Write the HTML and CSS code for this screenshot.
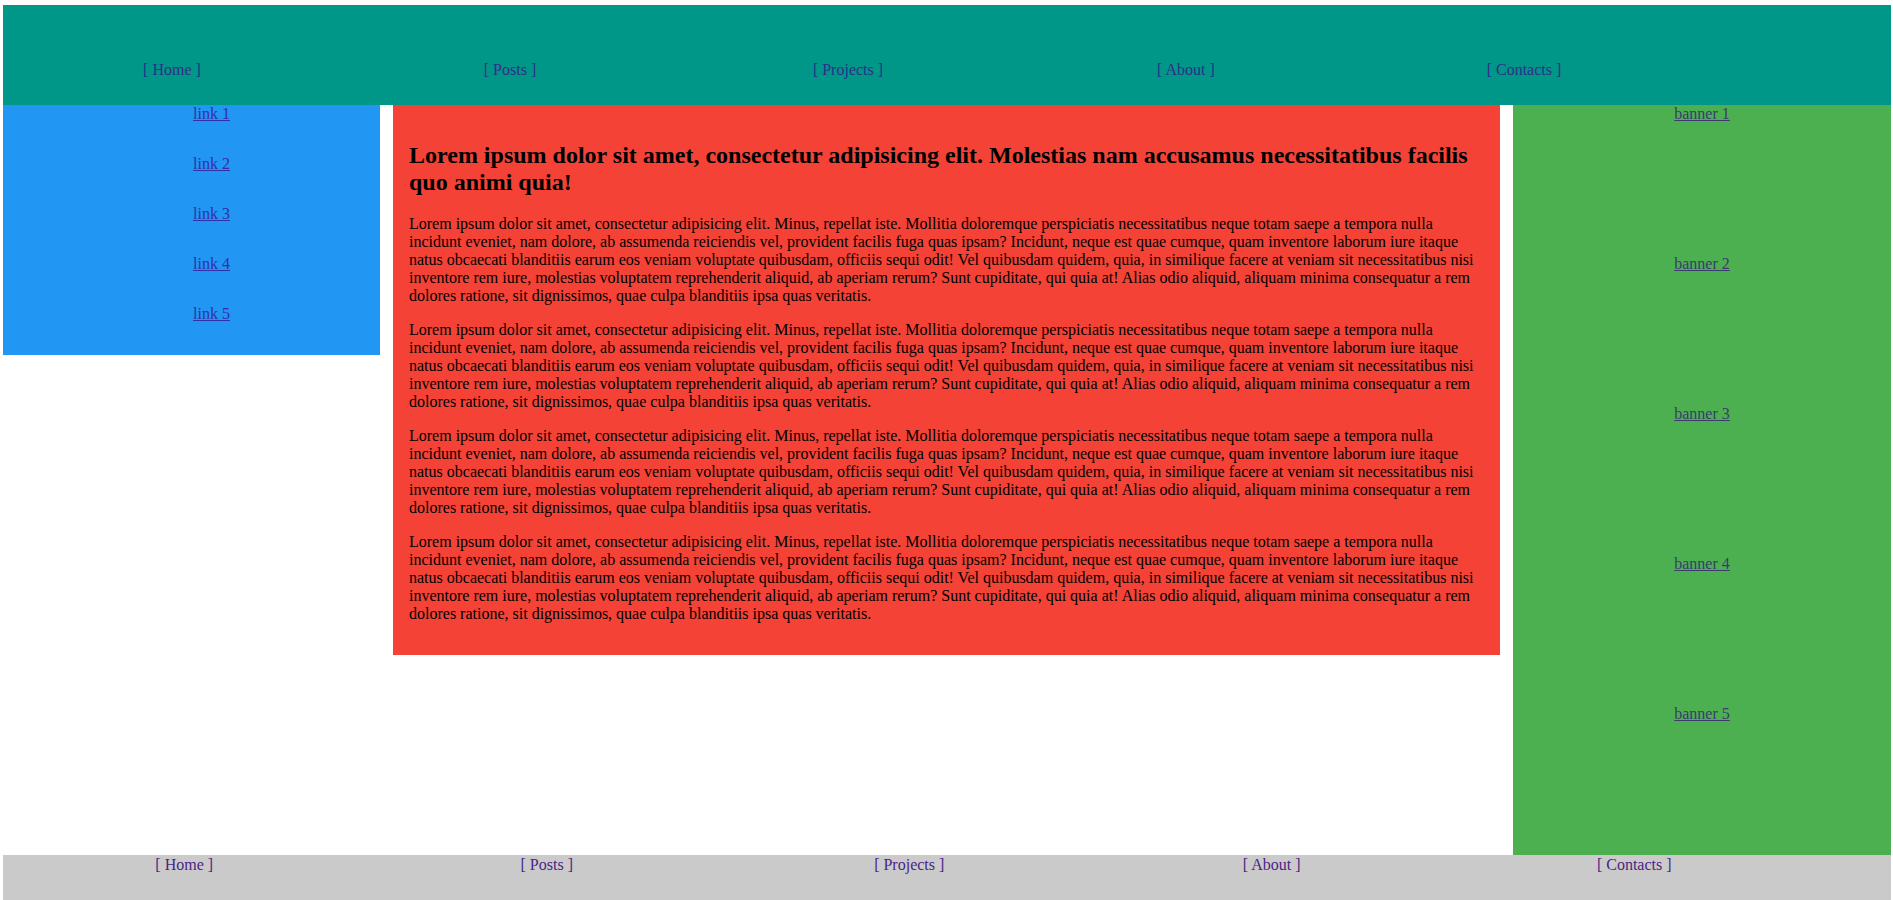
FILE: index.html
```html
<!DOCTYPE html>
<html lang="en">
<head>
<meta charset="utf-8">
<title>Layout</title>
<link rel="stylesheet" href="styles.css">
</head>
<body>
<header class="site-header">
  <nav class="top-nav">
    <a href="#">[ Home ]</a>
    <a href="#">[ Posts ]</a>
    <a href="#">[ Projects ]</a>
    <a href="#">[ About ]</a>
    <a href="#">[ Contacts ]</a>
  </nav>
</header>
<div class="layout">
  <aside class="sidebar">
    <ul class="side-links">
      <li><a href="#">link 1</a></li>
      <li><a href="#">link 2</a></li>
      <li><a href="#">link 3</a></li>
      <li><a href="#">link 4</a></li>
      <li><a href="#">link 5</a></li>
    </ul>
  </aside>
  <main class="content">
    <h2>Lorem ipsum dolor sit amet, consectetur adipisicing elit. Molestias nam accusamus necessitatibus facilis quo animi quia!</h2>
    <p>Lorem ipsum dolor sit amet, consectetur adipisicing elit. Minus, repellat iste. Mollitia doloremque perspiciatis necessitatibus neque totam saepe a tempora nulla incidunt eveniet, nam dolore, ab assumenda reiciendis vel, provident facilis fuga quas ipsam? Incidunt, neque est quae cumque, quam inventore laborum iure itaque natus obcaecati blanditiis earum eos veniam voluptate quibusdam, officiis sequi odit! Vel quibusdam quidem, quia, in similique facere at veniam sit necessitatibus nisi inventore rem iure, molestias voluptatem reprehenderit aliquid, ab aperiam rerum? Sunt cupiditate, qui quia at! Alias odio aliquid, aliquam minima consequatur a rem dolores ratione, sit dignissimos, quae culpa blanditiis ipsa quas veritatis.</p>
    <p>Lorem ipsum dolor sit amet, consectetur adipisicing elit. Minus, repellat iste. Mollitia doloremque perspiciatis necessitatibus neque totam saepe a tempora nulla incidunt eveniet, nam dolore, ab assumenda reiciendis vel, provident facilis fuga quas ipsam? Incidunt, neque est quae cumque, quam inventore laborum iure itaque natus obcaecati blanditiis earum eos veniam voluptate quibusdam, officiis sequi odit! Vel quibusdam quidem, quia, in similique facere at veniam sit necessitatibus nisi inventore rem iure, molestias voluptatem reprehenderit aliquid, ab aperiam rerum? Sunt cupiditate, qui quia at! Alias odio aliquid, aliquam minima consequatur a rem dolores ratione, sit dignissimos, quae culpa blanditiis ipsa quas veritatis.</p>
    <p>Lorem ipsum dolor sit amet, consectetur adipisicing elit. Minus, repellat iste. Mollitia doloremque perspiciatis necessitatibus neque totam saepe a tempora nulla incidunt eveniet, nam dolore, ab assumenda reiciendis vel, provident facilis fuga quas ipsam? Incidunt, neque est quae cumque, quam inventore laborum iure itaque natus obcaecati blanditiis earum eos veniam voluptate quibusdam, officiis sequi odit! Vel quibusdam quidem, quia, in similique facere at veniam sit necessitatibus nisi inventore rem iure, molestias voluptatem reprehenderit aliquid, ab aperiam rerum? Sunt cupiditate, qui quia at! Alias odio aliquid, aliquam minima consequatur a rem dolores ratione, sit dignissimos, quae culpa blanditiis ipsa quas veritatis.</p>
    <p>Lorem ipsum dolor sit amet, consectetur adipisicing elit. Minus, repellat iste. Mollitia doloremque perspiciatis necessitatibus neque totam saepe a tempora nulla incidunt eveniet, nam dolore, ab assumenda reiciendis vel, provident facilis fuga quas ipsam? Incidunt, neque est quae cumque, quam inventore laborum iure itaque natus obcaecati blanditiis earum eos veniam voluptate quibusdam, officiis sequi odit! Vel quibusdam quidem, quia, in similique facere at veniam sit necessitatibus nisi inventore rem iure, molestias voluptatem reprehenderit aliquid, ab aperiam rerum? Sunt cupiditate, qui quia at! Alias odio aliquid, aliquam minima consequatur a rem dolores ratione, sit dignissimos, quae culpa blanditiis ipsa quas veritatis.</p>
  </main>
  <aside class="banners">
    <div class="banner"><a href="#">banner 1</a></div>
    <div class="banner"><a href="#">banner 2</a></div>
    <div class="banner"><a href="#">banner 3</a></div>
    <div class="banner"><a href="#">banner 4</a></div>
    <div class="banner"><a href="#">banner 5</a></div>
  </aside>
</div>
<footer class="site-footer">
  <nav class="bottom-nav">
    <a href="#">[ Home ]</a>
    <a href="#">[ Posts ]</a>
    <a href="#">[ Projects ]</a>
    <a href="#">[ About ]</a>
    <a href="#">[ Contacts ]</a>
  </nav>
</footer>
</body>
</html>
```

FILE: styles.css
```css
html, body {
  background: #ffffff;
}

body {
  margin: 5px 2px 0 3px;
  font-family: "Liberation Serif", "Times New Roman", serif;
  font-size: 16px;
  color: #000000;
}

a {
  color: #551a8b;
}

.site-header {
  background: #009688;
  height: 100px;
  box-sizing: border-box;
  padding-top: 56px;
}

.top-nav {
  display: grid;
  grid-template-columns: repeat(5, 338px);
}

.top-nav a,
.bottom-nav a {
  text-align: center;
  text-decoration: none;
  color: #2f2f86;
}

.layout {
  display: grid;
  grid-template-columns: 377px 1107px 378px;
  column-gap: 13px;
  align-items: start;
}

.sidebar {
  background: #2196f3;
}

.side-links {
  list-style: none;
  margin: 0;
  padding: 0 0 0 40px;
  text-align: center;
}

.side-links li {
  margin-bottom: 32px;
}

.side-links a {
  color: #3030a8;
}

.content {
  background: #f44336;
  padding: 16px 16px;
}

.content h2 {
  font-size: 24px;
  margin: 21px 0 19px;
}

.content p {
  margin: 16px 0;
}

.banners {
  background: #4caf50;
}

.banner {
  height: 150px;
  text-align: center;
}

.banner a {
  color: #3b3b6e;
}

.site-footer {
  background: #cacaca;
  height: 60px;
  padding-top: 1px;
  box-sizing: border-box;
}

.bottom-nav {
  display: grid;
  grid-template-columns: repeat(5, 362.5px);
}

.bottom-nav a {
  color: #4b1f86;
}
```
